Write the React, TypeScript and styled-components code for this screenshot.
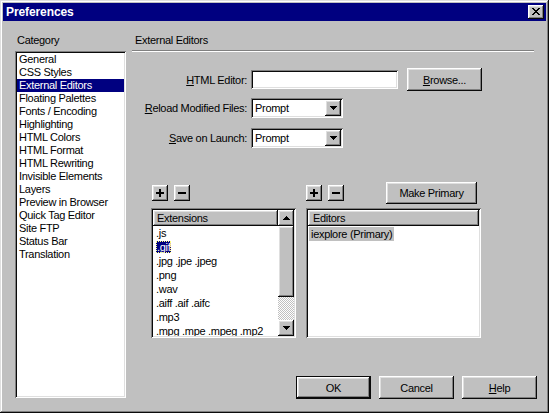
import React from "react";
import styled, { createGlobalStyle } from "styled-components";

const Colors = {
  Face: "#c0c0c0",
  Light: "#dfdfdf",
  White: "#ffffff",
  Shadow: "#808080",
  Dark: "#0a0a0a",
  Navy: "#000080",
};

const raised = `
  box-shadow: inset -1px -1px ${Colors.Dark}, inset 1px 1px ${Colors.White},
    inset -2px -2px ${Colors.Shadow}, inset 2px 2px ${Colors.Light};
`;

const sunken = `
  box-shadow: inset 1px 1px ${Colors.Shadow}, inset -1px -1px ${Colors.White},
    inset 2px 2px ${Colors.Dark}, inset -2px -2px ${Colors.Light};
`;

const GlobalStyle = createGlobalStyle`
  html, body {
    margin: 0;
    padding: 0;
    background: ${Colors.Face};
  }
  body {
    font-family: "Liberation Sans", Arial, sans-serif;
    font-size: 11px;
    letter-spacing: -0.3px;
    color: #000;
  }
  * { box-sizing: border-box; }
`;

const categories = [
  "General",
  "CSS Styles",
  "External Editors",
  "Floating Palettes",
  "Fonts / Encoding",
  "Highlighting",
  "HTML Colors",
  "HTML Format",
  "HTML Rewriting",
  "Invisible Elements",
  "Layers",
  "Preview in Browser",
  "Quick Tag Editor",
  "Site FTP",
  "Status Bar",
  "Translation",
];

const extensions = [
  ".js",
  ".gif",
  ".jpg .jpe .jpeg",
  ".png",
  ".wav",
  ".aiff .aif .aifc",
  ".mp3",
  ".mpg .mpe .mpeg .mp2",
];

const CloseIcon = () => (
  <svg width="8" height="7" viewBox="0 0 8 7" shapeRendering="crispEdges">
    <path d="M0 0h2v1h1v1h2V1h1V0h2v1H7v1H6v1H5v1h1v1h1v1h1v1H6V6H5V5H3v1H2v1H0V6h1V5h1V4h1V3H2V2H1V1H0z" fill="#000" />
  </svg>
);

const PlusIcon = () => (
  <svg width="8" height="8" viewBox="0 0 8 8" shapeRendering="crispEdges">
    <rect x="3" y="0" width="2" height="8" fill="#000" />
    <rect x="0" y="3" width="8" height="2" fill="#000" />
  </svg>
);

const MinusIcon = () => (
  <svg width="8" height="8" viewBox="0 0 8 8" shapeRendering="crispEdges">
    <rect x="0" y="3" width="8" height="2" fill="#000" />
  </svg>
);

const Arrow = ({ up }: { up?: boolean }) => (
  <svg width="7" height="4" viewBox="0 0 7 4" shapeRendering="crispEdges">
    {up ? (
      <path d="M3 0h1v1h1v1h1v1h1v1H0V3h1V2h1V1h1z" fill="#000" />
    ) : (
      <path d="M0 0h7v1H6v1H5v1H4v1H3V3H2V2H1V1H0z" fill="#000" />
    )}
  </svg>
);

const App: React.FC = () => {
  return (
    <>
      <GlobalStyle />
      <Dialog>
        <TitleBar>
          <TitleText>Preferences</TitleText>
          <CloseButton>
            <CloseIcon />
          </CloseButton>
        </TitleBar>
        <Content>
          <LeftColumn>
            <Caption>Category</Caption>
            <CategoryList>
              {categories.map((c) => (
                <CategoryItem key={c} $selected={c === "External Editors"}>
                  {c}
                </CategoryItem>
              ))}
            </CategoryList>
          </LeftColumn>
          <RightColumn>
            <Heading>External Editors</Heading>
            <Separator />
            <Form>
              <FieldRow $top={0} $height={23}>
                <FieldLabel>
                  <u>H</u>TML Editor:
                </FieldLabel>
                <TextInput />
                <PushButton $width={75} $height={23} style={{ marginLeft: 5 }}>
                  <u>B</u>rowse...
                </PushButton>
              </FieldRow>
              <FieldRow $top={7} $height={20}>
                <FieldLabel>
                  <u>R</u>eload Modified Files:
                </FieldLabel>
                <Combo>
                  <ComboValue>Prompt</ComboValue>
                  <ComboButton>
                    <Arrow />
                  </ComboButton>
                </Combo>
              </FieldRow>
              <FieldRow $top={10} $height={20}>
                <FieldLabel>
                  <u>S</u>ave on Launch:
                </FieldLabel>
                <Combo>
                  <ComboValue>Prompt</ComboValue>
                  <ComboButton>
                    <Arrow />
                  </ComboButton>
                </Combo>
              </FieldRow>
            </Form>
            <Panels>
              <Panel $width={145}>
                <Toolbar $padLeft={1}>
                  <IconButton>
                    <PlusIcon />
                  </IconButton>
                  <IconButton>
                    <MinusIcon />
                  </IconButton>
                </Toolbar>
                <ListBox>
                  <ListInner>
                    <ListMain>
                      <ListHeader>Extensions</ListHeader>
                      {extensions.map((e) => (
                        <ExtRow key={e}>
                          {e === ".gif" ? <FocusedText>{e}</FocusedText> : e}
                        </ExtRow>
                      ))}
                    </ListMain>
                    <ScrollBar>
                      <ScrollButton>
                        <Arrow up />
                      </ScrollButton>
                      <ScrollThumb />
                      <ScrollTrack />
                      <ScrollButton>
                        <Arrow />
                      </ScrollButton>
                    </ScrollBar>
                  </ListInner>
                </ListBox>
              </Panel>
              <Panel $width={175}>
                <Toolbar $padLeft={0}>
                  <IconButton>
                    <PlusIcon />
                  </IconButton>
                  <IconButton>
                    <MinusIcon />
                  </IconButton>
                  <PushButton $width={91} $height={22} style={{ marginLeft: "auto", marginRight: 4 }}>
                    Make Primary
                  </PushButton>
                </Toolbar>
                <ListBox>
                  <ListInner>
                    <ListMain>
                      <ListHeader $pad={5}>Editors</ListHeader>
                      <EditorItem>iexplore (Primary)</EditorItem>
                    </ListMain>
                  </ListInner>
                </ListBox>
              </Panel>
            </Panels>
            <ButtonRow>
              <PushButton $width={75} $height={23} $default>
                OK
              </PushButton>
              <PushButton $width={75} $height={23}>
                Cancel
              </PushButton>
              <PushButton $width={75} $height={23}>
                <u>H</u>elp
              </PushButton>
            </ButtonRow>
          </RightColumn>
        </Content>
      </Dialog>
    </>
  );
};

export default App;

const Dialog = styled.div`
  width: 549px;
  height: 413px;
  padding: 3px;
  background: ${Colors.Face};
  box-shadow: inset -1px -1px ${Colors.Dark}, inset 1px 1px ${Colors.Light},
    inset -2px -2px ${Colors.Shadow}, inset 2px 2px ${Colors.White};
  display: flex;
  flex-direction: column;
  overflow: hidden;
`;

const TitleBar = styled.div`
  height: 18px;
  background: ${Colors.Navy};
  display: flex;
  align-items: center;
  justify-content: space-between;
  padding: 0 2px 0 3px;
`;

const TitleText = styled.div`
  color: ${Colors.White};
  font-weight: bold;
  font-size: 12px;
  letter-spacing: -0.1px;
`;

const CloseButton = styled.div`
  width: 16px;
  height: 14px;
  background: ${Colors.Face};
  ${raised}
  display: flex;
  align-items: center;
  justify-content: center;
  padding-bottom: 1px;
`;

const Content = styled.div`
  display: flex;
  padding: 13px 0 0 12px;
`;

const LeftColumn = styled.div`
  width: 111px;
  display: flex;
  flex-direction: column;
`;

const Caption = styled.div`
  height: 13px;
  line-height: 13px;
  padding-left: 2px;
`;

const CategoryList = styled.div`
  margin-top: 4px;
  height: 347px;
  background: ${Colors.White};
  ${sunken}
  padding: 2px;
`;

const CategoryItem = styled.div<{ $selected?: boolean }>`
  height: 13px;
  line-height: 13px;
  padding-left: 2px;
  white-space: nowrap;
  background: ${(p) => (p.$selected ? Colors.Navy : "transparent")};
  color: ${(p) => (p.$selected ? Colors.White : "#000")};
`;

const RightColumn = styled.div`
  width: 405px;
  margin-left: 6px;
  display: flex;
  flex-direction: column;
`;

const Heading = styled.div`
  height: 13px;
  line-height: 13px;
  padding-left: 3px;
`;

const Separator = styled.div`
  margin-top: 3px;
  width: 402px;
  border-top: 1px solid ${Colors.Shadow};
  border-bottom: 1px solid ${Colors.White};
`;

const Form = styled.div`
  margin-top: 16px;
  display: flex;
  flex-direction: column;
`;

const FieldRow = styled.div<{ $top: number; $height: number }>`
  display: flex;
  align-items: center;
  gap: 4px;
  margin-top: ${(p) => p.$top}px;
  height: ${(p) => p.$height}px;
`;

const FieldLabel = styled.div`
  width: 115px;
  text-align: right;
  white-space: nowrap;
`;

const TextInput = styled.div`
  width: 147px;
  height: 19px;
  background: ${Colors.White};
  ${sunken}
`;

const Combo = styled.div`
  width: 92px;
  height: 20px;
  background: ${Colors.White};
  ${sunken}
  padding: 2px;
  display: flex;
  align-items: center;
`;

const ComboValue = styled.div`
  flex: 1;
  padding-left: 2px;
`;

const ComboButton = styled.div`
  width: 16px;
  height: 16px;
  background: ${Colors.Face};
  ${raised}
  display: flex;
  align-items: center;
  justify-content: center;
`;

const PushButton = styled.div<{ $width: number; $height: number; $default?: boolean }>`
  width: ${(p) => p.$width}px;
  height: ${(p) => p.$height}px;
  flex-shrink: 0;
  background: ${Colors.Face};
  display: flex;
  align-items: center;
  justify-content: center;
  white-space: nowrap;
  ${(p) =>
    p.$default
      ? `box-shadow: inset 0 0 0 1px ${Colors.Dark}, inset -2px -2px ${Colors.Dark}, inset 2px 2px ${Colors.White}, inset -3px -3px ${Colors.Shadow}, inset 3px 3px ${Colors.Light};`
      : raised}
`;

const Panels = styled.div`
  margin-top: 34px;
  padding-left: 19px;
  display: flex;
  gap: 10px;
`;

const Panel = styled.div<{ $width: number }>`
  width: ${(p) => p.$width}px;
  display: flex;
  flex-direction: column;
`;

const Toolbar = styled.div<{ $padLeft: number }>`
  height: 22px;
  display: flex;
  align-items: center;
  gap: 6px;
  padding-left: ${(p) => p.$padLeft}px;
`;

const IconButton = styled.div`
  width: 16px;
  height: 16px;
  background: ${Colors.Face};
  ${raised}
  display: flex;
  align-items: center;
  justify-content: center;
`;

const ListBox = styled.div`
  margin-top: 4px;
  height: 130px;
  background: ${Colors.White};
  ${sunken}
  padding: 2px;
`;

const ListInner = styled.div`
  height: 100%;
  display: flex;
  overflow: hidden;
`;

const ListMain = styled.div`
  flex: 1;
  display: flex;
  flex-direction: column;
  overflow: hidden;
`;

const ListHeader = styled.div<{ $pad?: number }>`
  height: 16px;
  line-height: 16px;
  flex-shrink: 0;
  background: ${Colors.Face};
  ${raised}
  padding-left: ${(p) => p.$pad ?? 4}px;
`;

const ExtRow = styled.div`
  height: 14px;
  line-height: 14px;
  flex-shrink: 0;
  padding-left: 3px;
  white-space: nowrap;
`;

const FocusedText = styled.span`
  background: ${Colors.Navy};
  color: ${Colors.White};
  padding: 0 1px;
  outline: 1px dotted #ffff80;
  outline-offset: -1px;
`;

const EditorItem = styled.div`
  align-self: flex-start;
  margin: 1px 0 0 1px;
  height: 14px;
  line-height: 14px;
  padding: 0 2px;
  background: ${Colors.Face};
`;

const ScrollBar = styled.div`
  width: 16px;
  display: flex;
  flex-direction: column;
`;

const ScrollButton = styled.div`
  width: 16px;
  height: 16px;
  flex-shrink: 0;
  background: ${Colors.Face};
  ${raised}
  display: flex;
  align-items: center;
  justify-content: center;
`;

const ScrollThumb = styled.div`
  height: 71px;
  flex-shrink: 0;
  background: ${Colors.Face};
  ${raised}
`;

const ScrollTrack = styled.div`
  flex: 1;
  background-color: ${Colors.White};
  background-image: repeating-conic-gradient(${Colors.Face} 0% 25%, ${Colors.White} 0% 50%);
  background-size: 2px 2px;
`;

const ButtonRow = styled.div`
  margin-top: 38px;
  display: flex;
  justify-content: flex-end;
  gap: 8px;
`;
